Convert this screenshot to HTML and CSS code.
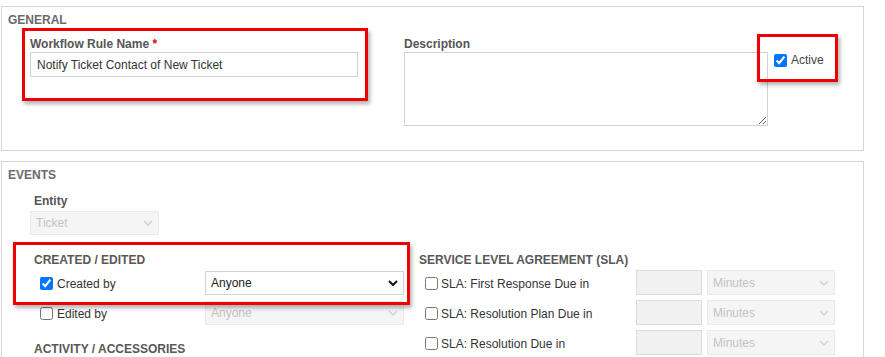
FILE: index.html
```html
<!DOCTYPE html>
<html lang="en">
<head>
  <meta charset="UTF-8">
  <title>Workflow Rule</title>
  <link rel="stylesheet" href="styles.css">
</head>
<body>
  <div class="page">

    <!-- General -->
    <section class="panel panel-general">
      <h2 class="panel-title">GENERAL</h2>
      <div class="general-row">
        <div class="field name-field">
          <label class="field-label">Workflow Rule Name <span class="req">*</span></label>
          <input class="text-input" type="text" value="Notify Ticket Contact of New Ticket">
        </div>
        <div class="field desc-field">
          <label class="field-label">Description</label>
          <textarea class="text-area"></textarea>
        </div>
        <label class="check active-check"><input type="checkbox" checked>Active</label>
      </div>
    </section>

    <!-- Events -->
    <section class="panel panel-events">
      <h2 class="panel-title">EVENTS</h2>
      <div class="entity-field">
        <label class="field-label">Entity</label>
        <select class="select entity-select" disabled><option>Ticket</option></select>
      </div>

      <div class="event-columns">
        <div class="event-col event-col-left">
          <h3 class="group-title">CREATED / EDITED</h3>
          <div class="event-row">
            <label class="check"><input type="checkbox" checked>Created by</label>
            <select class="select who-select"><option>Anyone</option></select>
          </div>
          <div class="event-row">
            <label class="check"><input type="checkbox">Edited by</label>
            <select class="select who-select" disabled><option>Anyone</option></select>
          </div>
          <h3 class="group-title activity-title">ACTIVITY / ACCESSORIES</h3>
        </div>

        <div class="event-col event-col-right">
          <h3 class="group-title">SERVICE LEVEL AGREEMENT (SLA)</h3>
          <div class="event-row">
            <label class="check"><input type="checkbox">SLA: First Response Due in</label>
            <input class="num-input" type="text" disabled>
            <select class="select unit-select" disabled><option>Minutes</option></select>
          </div>
          <div class="event-row">
            <label class="check"><input type="checkbox">SLA: Resolution Plan Due in</label>
            <input class="num-input" type="text" disabled>
            <select class="select unit-select" disabled><option>Minutes</option></select>
          </div>
          <div class="event-row">
            <label class="check"><input type="checkbox">SLA: Resolution Due in</label>
            <input class="num-input" type="text" disabled>
            <select class="select unit-select" disabled><option>Minutes</option></select>
          </div>
        </div>
      </div>
    </section>

    <!-- highlight callouts drawn over the form -->
    <div class="callout callout-name"></div>
    <div class="callout callout-active"></div>
    <div class="callout callout-created"></div>
  </div>
</body>
</html>
```

FILE: styles.css
```css
html, body {
  margin: 0;
  overflow: hidden;
  background: #fff;
}

body {
  font-family: "Liberation Sans", Arial, sans-serif;
  font-size: 12px;
  line-height: 14px;
  color: #333;
}

.page {
  position: relative;
  width: 863px;
  padding: 6px 0 0 1px;
}

/* panels */
.panel {
  box-sizing: border-box;
  border: 1px solid #d6d6d6;
  padding: 6px;
}

.panel-general {
  height: 145px;
}

.panel-events {
  margin-top: 10px;
  height: 200px;
}

.panel-title {
  margin: 0;
  font-size: 12px;
  font-weight: bold;
  color: #6a6a6a;
}

.field-label {
  display: block;
  font-weight: bold;
  color: #555;
}

.req {
  color: #e00;
}

/* general row */
.general-row {
  display: flex;
  align-items: flex-start;
  margin-top: 10px;
}

.name-field {
  margin-left: 22px;
  width: 328px;
}

.desc-field {
  margin-left: 46px;
  width: 364px;
}

.text-input,
.text-area {
  display: block;
  box-sizing: border-box;
  width: 100%;
  margin: 1px 0 0;
  border: 1px solid #d2d2d2;
  border-radius: 0;
  font-family: inherit;
  font-size: 12px;
  color: #333;
  padding: 0 6px;
  outline: none;
}

.text-input {
  height: 25px;
}

.text-area {
  height: 74px;
}

.check {
  display: flex;
  align-items: center;
  color: #333;
  white-space: nowrap;
}

.check input {
  width: 13px;
  height: 13px;
  margin: 0 4px 0 0;
}

.active-check {
  margin: 16px 0 0 6px;
  color: #444;
}

/* events */
.entity-field {
  margin: 12px 0 0 22px;
}

.entity-field .field-label {
  padding-left: 4px;
}

.select {
  appearance: none;
  -webkit-appearance: none;
  box-sizing: border-box;
  height: 24px;
  margin: 0;
  padding: 0 20px 0 5px;
  border: 1px solid #d2d2d2;
  border-radius: 0;
  font-family: inherit;
  font-size: 12px;
  color: #222;
  background: #fff url("data:image/svg+xml,%3Csvg xmlns='http://www.w3.org/2000/svg' width='10' height='6' viewBox='0 0 10 6'%3E%3Cpath d='M1 1l4 4 4-4' fill='none' stroke='%23111' stroke-width='2'/%3E%3C/svg%3E") no-repeat right 5px center;
  outline: none;
}

.select:disabled {
  color: #aaa;
  background-color: #f1f1f1;
  border-color: #e2e2e2;
  background-image: url("data:image/svg+xml,%3Csvg xmlns='http://www.w3.org/2000/svg' width='10' height='6' viewBox='0 0 10 6'%3E%3Cpath d='M1 1l4 4 4-4' fill='none' stroke='%23bbb' stroke-width='1.4'/%3E%3C/svg%3E");
}

.entity-select {
  display: block;
  width: 129px;
  margin-top: 3px;
}

.event-columns {
  display: flex;
  margin: 18px 0 0 26px;
  gap: 15px;
}

.event-col-left {
  width: 370px;
}

.event-col-right {
  width: 416px;
}

.group-title {
  margin: 0 0 3px;
  font-size: 12px;
  font-weight: bold;
  color: #585858;
}

.event-row {
  display: flex;
  align-items: center;
  height: 25px;
  margin-bottom: 5px;
  padding-left: 6px;
}

.event-row .check {
  flex: 1;
  padding-top: 2px;
}

.event-col-right .event-row .check input {
  margin-right: 3px;
}

.who-select {
  width: 199px;
}

.activity-title {
  margin-top: 17px;
}

.num-input {
  box-sizing: border-box;
  width: 66px;
  height: 25px;
  margin: 0 5px 0 0;
  border: 1px solid #dcdcdc;
  background: #f1f1f1;
  padding: 0;
}

.unit-select {
  width: 128px;
  height: 25px;
}

/* red highlight callouts */
.callout {
  position: absolute;
  box-sizing: border-box;
  border: 3px solid #ee0000;
  box-shadow: 2px 3px 4px rgba(0, 0, 0, 0.3);
  pointer-events: none;
}

.callout-name {
  left: 22px;
  top: 28px;
  width: 346px;
  height: 73px;
}

.callout-active {
  left: 757px;
  top: 34px;
  width: 81px;
  height: 48px;
}

.callout-created {
  left: 13px;
  top: 242px;
  width: 397px;
  height: 63px;
}
```
